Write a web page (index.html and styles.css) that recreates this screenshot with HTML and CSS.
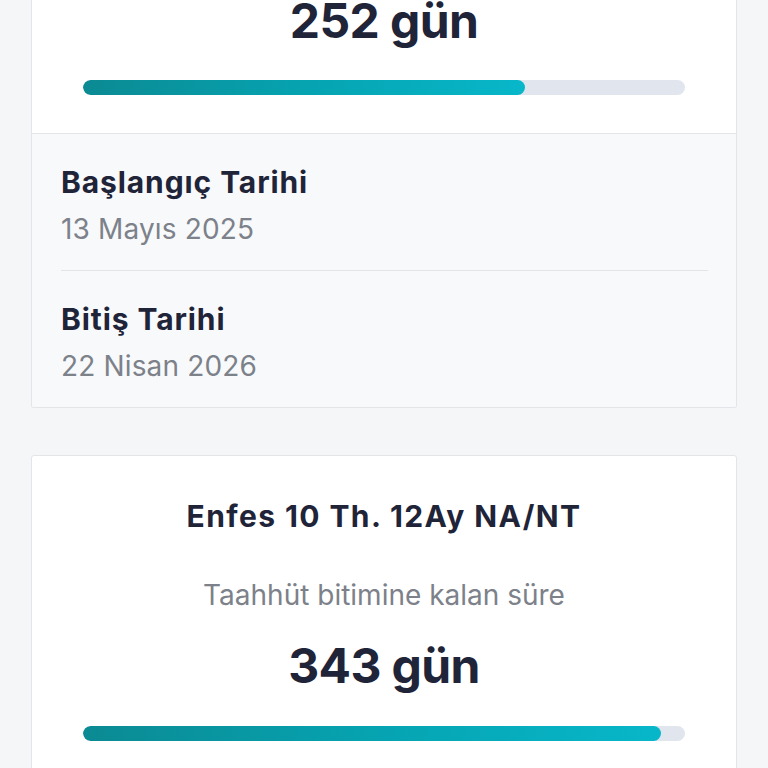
FILE: index.html
```html
<!DOCTYPE html>
<html lang="tr">
<head>
<meta charset="utf-8">
<link rel="stylesheet" href="styles.css">
</head>
<body>
<div class="card card-top">
  <div class="summary">
    <div class="days days-first">252 gün</div>
    <div class="bar"><div class="fill" style="width:73.4%"></div></div>
  </div>
  <div class="dates">
    <div class="date-row">
      <div class="date-label">Başlangıç Tarihi</div>
      <div class="date-value">13 Mayıs 2025</div>
    </div>
    <div class="date-row">
      <div class="date-label">Bitiş Tarihi</div>
      <div class="date-value">22 Nisan 2026</div>
    </div>
  </div>
</div>
<div class="card card-second">
  <div class="summary summary-full">
    <div class="plan">Enfes 10 Th. 12Ay NA/NT</div>
    <div class="caption">Taahhüt bitimine kalan süre</div>
    <div class="days days-second">343 gün</div>
    <div class="bar"><div class="fill" style="width:96%"></div></div>
  </div>
</div>
</body>
</html>
```

FILE: styles.css
```css
html, body {
  margin: 0;
  padding: 0;
}
body {
  background: #f5f6f8;
  padding: 0 31px;
  font-family: Inter, Lato, "Noto Sans", sans-serif;
  color: #1f2438;
}
.card {
  background: #ffffff;
  border: 1px solid #e3e5e9;
  border-radius: 3px;
  overflow: hidden;
}
.card-top {
  border-top: none;
  border-top-left-radius: 0;
  border-top-right-radius: 0;
}
.card-second {
  margin-top: 47px;
}
.summary {
  padding: 0 51px 38px;
  text-align: center;
}
.days {
  font-size: 48px;
  font-weight: 700;
  line-height: 56px;
  letter-spacing: -0.6px;
  color: #1f2438;
}
.days-first {
  margin-top: -7px;
}
.days-second {
  margin-top: 26px;
}
.bar {
  height: 15px;
  border-radius: 8px;
  background: #e1e5ed;
  margin-top: 31px;
  overflow: hidden;
}
.fill {
  height: 100%;
  border-radius: 8px;
  background: linear-gradient(90deg, #0b8a93 0%, #06a3b1 50%, #07b7c9 100%);
}
.dates {
  background: #f8f9fb;
  border-top: 1px solid #e3e5e9;
  padding: 0 28px 0 29px;
}
.date-row {
  padding: 30px 0 24px;
}
.date-row + .date-row {
  border-top: 1px solid #e2e4e8;
}
.date-label {
  font-size: 30px;
  font-weight: 700;
  line-height: 36px;
  letter-spacing: 0.9px;
  color: #1f2438;
}
.date-value {
  font-size: 28px;
  font-weight: 400;
  line-height: 34px;
  margin-top: 12px;
  letter-spacing: 0.15px;
  color: #7c818a;
}
.summary-full {
  padding-top: 42px;
}
.summary-full .bar {
  margin-top: 32px;
}
.plan {
  font-size: 30px;
  font-weight: 700;
  line-height: 36px;
  letter-spacing: 1.4px;
}
.caption {
  font-size: 28px;
  line-height: 34px;
  color: #7c818a;
  margin-top: 44px;
}
```
